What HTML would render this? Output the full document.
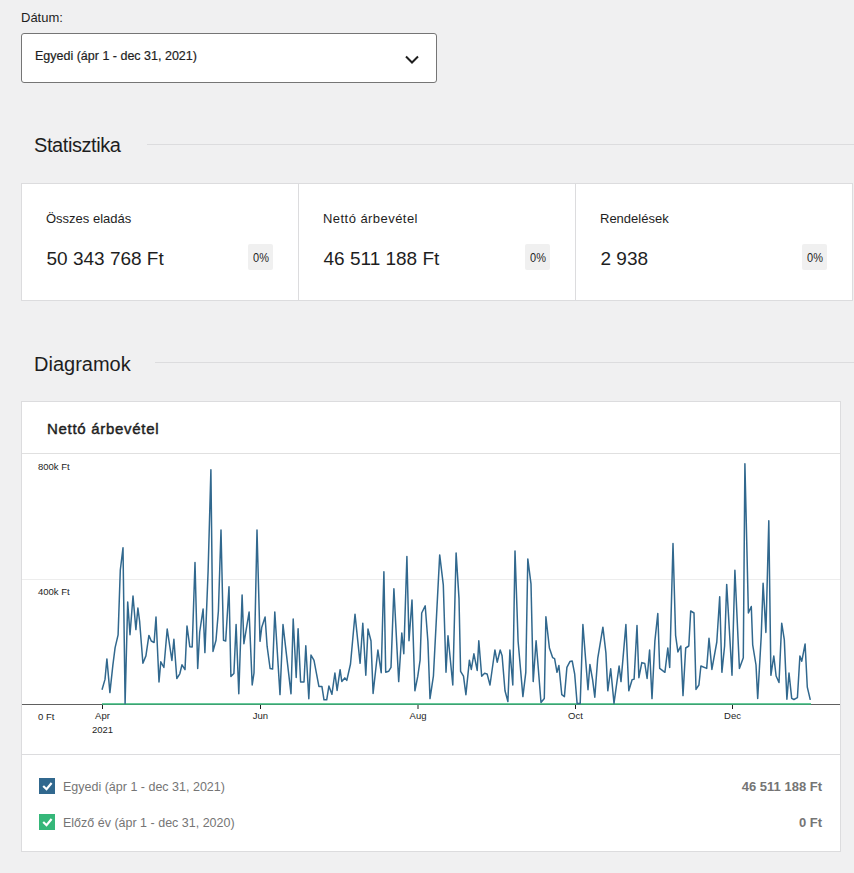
<!DOCTYPE html>
<html><head><meta charset="utf-8">
<style>
*{box-sizing:border-box;margin:0;padding:0}
html,body{width:854px;height:873px;overflow:hidden;background:#f0f0f1;font-family:"Liberation Sans",sans-serif;color:#1e1e1e}
.abs{position:absolute;white-space:nowrap}
.lbl{left:21px;top:10px;font-size:13px;color:#1e1e1e}
.datebox{left:21px;top:33px;width:416px;height:50px;background:#fff;border:1px solid #757575;border-radius:3px}
.datebox .t{position:absolute;left:13px;top:15px;font-size:12.5px;color:#1e1e1e;-webkit-text-stroke:0.2px #1e1e1e}
.h2{font-size:20px;color:#1e1e1e}
.hline{height:1px;background:#dcdcde}
.cards{left:21px;top:183px;width:832px;height:118px;background:#fff;border:1px solid #dcdcde}
.card{position:absolute;top:0;height:116px}
.card .n{position:absolute;left:24px;top:27px;font-size:13px}
.card .v{position:absolute;left:24.5px;top:64px;font-size:19px}
.card .b{position:absolute;top:60px;width:25px;height:26px;background:#f0f0f0;border-radius:2px;font-size:11px;line-height:26px;padding-top:0px;padding-left:1px;text-align:center}
.card .b span{display:inline-block;transform:scaleY(1.15)}
.chart{left:21px;top:401px;width:820px;height:451px;background:#fff;border:1px solid #dcdcde}
.ctitle{left:47px;top:420px;font-size:15px;font-weight:normal;color:#1e1e1e;-webkit-text-stroke:0.45px #1e1e1e;letter-spacing:0.7px}
.ax{font-size:10px;color:#1e1e1e}
.leg{font-size:12.5px;color:#757575}
.cb{width:16px;height:16px}
.val{font-size:13px;font-weight:bold;color:#757575;text-align:right}
</style></head><body>
<div class="abs lbl">Dátum:</div>
<div class="abs datebox"><div class="t">Egyedi (ápr 1 - dec 31, 2021)</div>
<svg class="abs" style="left:383px;top:21px" width="14" height="10" viewBox="0 0 14 10"><path d="M1 1.5 L7 7.5 L13 1.5" fill="none" stroke="#1e1e1e" stroke-width="2"/></svg>
</div>

<div class="abs h2" style="left:34px;top:134px;letter-spacing:-0.42px">Statisztika</div>
<div class="abs hline" style="left:147px;top:144px;width:707px"></div>

<div class="abs cards">
 <div class="card" style="left:0;width:277px"><div class="n">Összes eladás</div><div class="v">50 343 768 Ft</div><div class="b" style="left:226px"><span>0%</span></div></div>
 <div class="card" style="left:276px;width:277px;border-left:1px solid #dcdcde"><div class="n" style="letter-spacing:0.45px">Nettó árbevétel</div><div class="v">46 511 188 Ft</div><div class="b" style="left:226px"><span>0%</span></div></div>
 <div class="card" style="left:553px;width:277px;border-left:1px solid #dcdcde"><div class="n">Rendelések</div><div class="v">2 938</div><div class="b" style="left:226px"><span>0%</span></div></div>
</div>

<div class="abs h2" style="left:34px;top:353px">Diagramok</div>
<div class="abs hline" style="left:155px;top:362px;width:699px"></div>

<div class="abs chart"></div>
<div class="abs ctitle">Nettó árbevétel</div>

<svg class="abs" style="left:0;top:0" width="854" height="873" viewBox="0 0 854 873">
 <line x1="22" y1="453.5" x2="840" y2="453.5" stroke="#e0e0e0" stroke-width="1"/>
 <line x1="22" y1="579.5" x2="840" y2="579.5" stroke="#ededed" stroke-width="1"/>
 <line x1="22" y1="754.5" x2="840" y2="754.5" stroke="#dcdcde" stroke-width="1"/>
 <line x1="22" y1="704.5" x2="840" y2="704.5" stroke="#606060" stroke-width="1"/>
 <g stroke="#1e1e1e" stroke-width="1">
  <line x1="102.5" y1="705" x2="102.5" y2="709"/>
  <line x1="260.5" y1="705" x2="260.5" y2="709"/>
  <line x1="418" y1="705" x2="418" y2="709"/>
  <line x1="575.5" y1="705" x2="575.5" y2="709"/>
  <line x1="732.5" y1="705" x2="732.5" y2="709"/>
 </g>
 <line x1="102" y1="704" x2="811" y2="704" stroke="#35b779" stroke-width="1.6"/>
 <polyline fill="none" stroke="#31688e" stroke-width="1.5" stroke-linejoin="round" points="102.0,689.8 105.0,679.4 106.9,658.9 109.9,692.6 112.9,664.8 115.1,647.7 118.1,634.8 120.3,570.0 123.0,547.8 125.1,703.5 127.7,602.0 130.0,634.8 133.0,596.0 135.9,629.6 137.9,608.0 139.6,621.0 142.9,663.3 145.9,655.9 148.9,635.4 151.3,641.0 154.1,642.5 156.0,617.0 159.0,682.0 160.8,661.8 163.9,667.5 167.2,629.0 171.9,660.4 173.9,639.2 176.8,678.5 179.8,673.8 182.0,664.8 185.0,669.6 187.0,626.0 189.8,646.7 192.2,647.0 195.0,562.4 197.7,668.5 199.7,632.0 203.1,609.0 204.9,652.6 208.1,571.3 210.9,469.7 213.0,651.4 216.0,640.3 218.4,611.0 221.0,530.0 223.5,640.3 225.7,641.0 229.0,586.7 230.9,676.4 233.9,673.5 236.1,624.6 238.8,693.8 242.1,594.9 243.9,643.7 249.1,612.0 252.2,684.9 254.0,673.0 257.0,530.0 260.0,641.3 261.7,627.6 265.1,617.0 267.1,646.2 270.1,668.5 272.6,669.0 274.8,612.0 280.0,694.6 283.0,624.6 291.0,693.8 293.2,619.0 296.2,677.5 298.1,628.8 300.6,682.0 304.0,682.0 305.8,645.8 308.8,698.8 311.0,655.0 314.0,660.4 318.9,686.4 321.9,686.4 324.0,699.8 326.7,699.8 328.9,686.0 331.9,694.3 334.9,673.0 337.1,690.4 340.1,669.7 341.8,681.5 344.8,677.9 346.8,680.4 350.5,664.0 355.0,614.2 360.1,663.3 362.8,623.2 365.8,675.2 368.0,629.1 371.0,641.0 373.1,693.4 377.9,650.0 381.2,672.7 383.9,571.8 385.7,672.3 388.6,671.3 391.0,667.4 393.9,588.8 398.7,681.6 401.8,633.0 403.8,653.8 406.9,556.5 409.0,640.8 412.0,600.0 414.9,690.8 417.8,676.2 420.1,660.2 421.7,613.0 425.2,605.8 427.9,641.2 430.0,698.6 433.4,676.2 439.7,554.9 443.3,584.8 446.0,672.3 448.0,635.7 452.8,685.0 456.1,552.9 459.0,598.4 460.6,671.3 463.5,676.2 465.9,694.7 469.4,660.2 471.3,669.4 473.9,653.8 477.2,670.4 478.8,640.8 481.7,676.2 484.6,673.3 487.1,673.9 490.0,685.0 494.9,650.0 497.2,662.2 500.2,650.0 502.1,655.8 505.0,690.8 507.9,701.5 509.9,650.0 512.8,685.0 515.0,550.9 518.1,641.2 522.9,696.6 525.8,672.3 527.8,558.9 531.0,583.8 533.2,681.6 536.1,640.8 541.0,702.5 544.3,698.6 545.9,616.8 549.4,648.0 552.7,657.7 554.6,658.7 557.0,672.3 558.9,665.5 561.8,694.7 564.4,696.6 566.9,667.4 569.9,661.6 572.2,661.0 574.7,674.2 577.1,703.4 580.2,703.4 582.9,624.6 588.0,689.8 589.9,664.5 592.6,679.7 594.8,697.2 597.7,658.7 602.9,627.2 605.9,652.8 607.8,690.8 610.7,668.8 614.0,703.4 619.1,666.0 621.0,681.6 625.9,624.6 628.8,690.8 632.1,679.7 634.1,679.1 637.0,625.6 638.9,677.7 641.8,662.6 644.8,663.5 647.1,678.5 649.6,650.0 652.0,698.6 654.9,640.8 657.8,613.5 659.7,668.4 664.9,672.3 667.8,648.0 669.7,667.4 673.0,543.5 675.6,635.3 677.9,651.9 680.8,646.0 683.0,695.6 685.7,648.0 688.8,646.0 690.7,611.0 694.0,613.0 696.0,689.4 698.9,685.0 700.9,666.0 706.7,668.4 709.0,638.2 711.9,669.4 716.8,642.0 719.7,596.8 721.9,672.3 724.6,646.0 726.7,584.4 732.0,675.2 734.9,570.2 739.4,668.4 743.3,657.7 744.9,463.8 748.4,612.9 751.3,606.5 752.7,644.8 756.0,665.0 757.7,698.4 761.2,636.6 763.1,583.3 765.9,632.4 768.8,520.8 770.9,675.3 773.8,656.0 776.1,676.0 779.0,682.5 781.7,623.2 784.3,639.6 786.9,699.2 789.0,673.0 791.7,698.4 793.9,699.5 797.4,697.7 799.9,656.0 801.8,661.2 805.1,644.0 807.3,687.2 810.3,699.9"/>
 <g font-family="Liberation Sans" font-size="9.5" fill="#1e1e1e">
  <text x="38" y="470">800k Ft</text>
  <text x="38" y="595">400k Ft</text>
  <text x="38" y="720">0 Ft</text>
  <g text-anchor="middle">
  <text x="102.5" y="719.3">Apr</text>
  <text x="102.5" y="733">2021</text>
  <text x="260.5" y="719.3">Jun</text>
  <text x="418" y="719.3">Aug</text>
  <text x="575.5" y="719.3">Oct</text>
  <text x="732.5" y="719.3">Dec</text>
  </g>
 </g>
</svg>

<div class="abs cb" style="left:39px;top:778px;background:#31688e"><svg width="16" height="16" viewBox="0 0 16 16"><path d="M4.2 8 L7.5 11.2 L12.6 5" fill="none" stroke="#fff" stroke-width="2.2"/></svg></div>
<div class="abs leg" style="left:63px;top:780px">Egyedi (ápr 1 - dec 31, 2021)</div>
<div class="abs val" style="right:32px;top:778.5px">46 511 188 Ft</div>
<div class="abs cb" style="left:39px;top:814px;background:#35b779"><svg width="16" height="16" viewBox="0 0 16 16"><path d="M4.2 8 L7.5 11.2 L12.6 5" fill="none" stroke="#fff" stroke-width="2.2"/></svg></div>
<div class="abs leg" style="left:63px;top:816px">Előző év (ápr 1 - dec 31, 2020)</div>
<div class="abs val" style="right:32px;top:814.5px">0 Ft</div>
</body></html>
